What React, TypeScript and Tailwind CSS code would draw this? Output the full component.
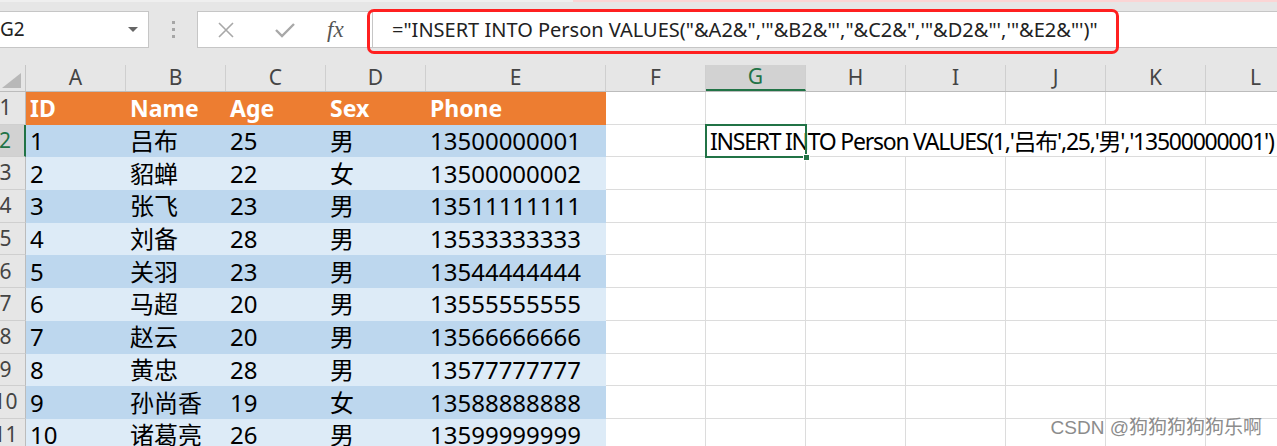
import React from "react";

interface ICol {
  key: string;
  w: string;
}

const columns: ICol[] = [
  { key: "A", w: "w-[100px]" },
  { key: "B", w: "w-[100px]" },
  { key: "C", w: "w-[100px]" },
  { key: "D", w: "w-[100px]" },
  { key: "E", w: "w-[180px]" },
  { key: "F", w: "w-[100px]" },
  { key: "G", w: "w-[100px]" },
  { key: "H", w: "w-[100px]" },
  { key: "I", w: "w-[100px]" },
  { key: "J", w: "w-[100px]" },
  { key: "K", w: "w-[100px]" },
  { key: "L", w: "w-[100px]" },
];

const header = ["ID", "Name", "Age", "Sex", "Phone"];

const people = [
  ["1", "吕布", "25", "男", "13500000001"],
  ["2", "貂蝉", "22", "女", "13500000002"],
  ["3", "张飞", "23", "男", "13511111111"],
  ["4", "刘备", "28", "男", "13533333333"],
  ["5", "关羽", "23", "男", "13544444444"],
  ["6", "马超", "20", "男", "13555555555"],
  ["7", "赵云", "20", "男", "13566666666"],
  ["8", "黄忠", "28", "男", "13577777777"],
  ["9", "孙尚香", "19", "女", "13588888888"],
  ["10", "诸葛亮", "26", "男", "13599999999"],
];

const formula = `="INSERT INTO Person VALUES("&A2&",'"&B2&"',"&C2&",'"&D2&"','"&E2&"')"`;
const result = "INSERT INTO Person VALUES(1,'吕布',25,'男','13500000001')";

function FormulaBar() {
  return (
    <div className="h-[65px] bg-[#e6e6e6] flex flex-col">
      <div className="h-[2px] flex">
        <div className="w-[573px] bg-[#efefef]" />
        <div className="flex-1 bg-[#fbd5d5]" />
      </div>
      <div className="flex items-start pt-[9px]">
        {/* name box */}
        <div className="-ml-[12px] w-[161px] h-[37px] bg-white border border-[#c6c6c6] flex items-center justify-between pl-[11px] pr-[10px] text-[19px] text-[#222]">
          <span>G2</span>
          <svg width="10" height="6" viewBox="0 0 10 6">
            <path d="M0 0 L10 0 L5 5 Z" fill="#666" />
          </svg>
        </div>
        <div className="w-[48px] h-[37px] flex flex-col items-center justify-center gap-[4px]">
          <div className="w-[3px] h-[3px] bg-[#a6a6a6]" />
          <div className="w-[3px] h-[3px] bg-[#a6a6a6]" />
          <div className="w-[3px] h-[3px] bg-[#a6a6a6]" />
        </div>
        {/* cancel / enter / fx */}
        <div className="w-[176px] h-[37px] bg-white border border-[#c6c6c6] flex items-center pl-[20px]">
          <svg width="16" height="16" viewBox="0 0 16 16">
            <path d="M1 1 L15 15 M15 1 L1 15" stroke="#a8a8a8" strokeWidth="1.6" />
          </svg>
          <svg width="20" height="16" viewBox="0 0 20 16" className="ml-[41px]">
            <path d="M1 8 L7 14 L19 2" stroke="#a8a8a8" strokeWidth="2.4" fill="none" />
          </svg>
          <span
            className="ml-[32px] text-[23px] italic text-[#555] leading-none"
            style={{ fontFamily: "'Liberation Serif', 'DejaVu Serif', serif" }}
          >
            fx
          </span>
        </div>
        {/* formula input */}
        <div className="relative flex-1 h-[37px] bg-white border-y border-[#c6c6c6] flex items-center pl-[19px] text-[20px] text-[#222] whitespace-nowrap">
          <span>{formula}</span>
          <div className="absolute -left-[6px] -top-[3px] w-[752px] h-[45px] border-[3px] border-[#ff2020] rounded-[7px]" />
        </div>
      </div>
    </div>
  );
}

function ColumnHeaders() {
  return (
    <div className="flex h-[27px] bg-[#e6e6e6] border-b border-[#bcbcbc]">
      <div className="-ml-[14px] w-[40px] shrink-0 border-r border-[#c6c6c6] flex items-end justify-end pr-[4px] pb-[3px]">
        <svg width="19" height="15" viewBox="0 0 19 15">
          <path d="M19 0 L19 15 L0 15 Z" fill="#b8b8b8" />
        </svg>
      </div>
      {columns.map((c) => (
        <div
          key={c.key}
          className={`${c.w} shrink-0 flex items-center justify-center text-[21px] border-r border-[#cfcfcf] ${
            c.key === "G" ? "bg-[#d2d2d2] text-[#217346] border-b-2 border-b-[#217346]" : "text-[#444]"
          }`}
        >
          {c.key}
        </div>
      ))}
    </div>
  );
}

function RowHeader({ n }: { n: number }) {
  const active = n === 2;
  return (
    <div
      className={`-ml-[14px] w-[40px] shrink-0 flex items-center justify-center text-[21px] border-b border-[#cfcfcf] ${
        active
          ? "bg-[#d2d2d2] text-[#217346] border-r-2 border-r-[#217346]"
          : "bg-[#e6e6e6] text-[#444] border-r border-r-[#bcbcbc]"
      }`}
    >
      {n}
    </div>
  );
}

function App() {
  const rows = [header, ...people];

  return (
    <main
      className="w-full h-[446px] overflow-hidden bg-white relative"
      style={{ fontFamily: "'Noto Sans', 'Noto Sans CJK SC', sans-serif" }}
    >
      <FormulaBar />
      <ColumnHeaders />

      {rows.map((row, i) => {
        const n = i + 1;
        const isHead = n === 1;
        const fill = isHead
          ? "bg-[#ed7d31] text-white font-bold text-[23px]"
          : n % 2 === 0
          ? "bg-[#bdd7ee] text-black text-[24px]"
          : "bg-[#ddebf7] text-black text-[24px]";
        return (
          <div key={n} className="flex h-[32.7px]">
            <RowHeader n={n} />
            {row.map((v, j) => (
              <div
                key={j}
                className={`${columns[j].w} shrink-0 relative flex items-center pl-[4px] whitespace-nowrap ${fill}`}
              >
                {v}
                {n === 11 && j === 4 && <div className="absolute right-[2px] bottom-[2px] w-[3px] h-[3px] bg-[#4b5cc4]" />}
              </div>
            ))}
            {columns.slice(5).map((c) => {
              if (n === 2 && c.key === "G") {
                // selected cell, its text spills over H..L
                return (
                  <div key={c.key} className={`${c.w} shrink-0 relative z-10 flex items-center pl-[4px] text-[23px] tracking-[-1.25px] whitespace-nowrap text-black`}>
                    <span>{result}</span>
                    <div className="absolute -inset-[1px] border-2 border-[#217346]" />
                    <div className="absolute -right-[4px] -bottom-[4px] w-[7px] h-[7px] bg-[#217346] border border-white" />
                  </div>
                );
              }
              const hideRight = n === 2 && c.key !== "L";
              return (
                <div
                  key={c.key}
                  className={`${c.w} shrink-0 border-b border-[#dcdcdc] ${hideRight ? "" : "border-r"}`}
                />
              );
            })}
          </div>
        );
      })}

      <div
        className="absolute right-[15px] bottom-[9px] text-[19px] text-[#8c8c8c] leading-none"
        style={{ fontFamily: "'Liberation Sans', 'Noto Sans CJK SC', sans-serif" }}
      >
        CSDN @狗狗狗狗狗乐啊
      </div>
    </main>
  );
}

export default App;
